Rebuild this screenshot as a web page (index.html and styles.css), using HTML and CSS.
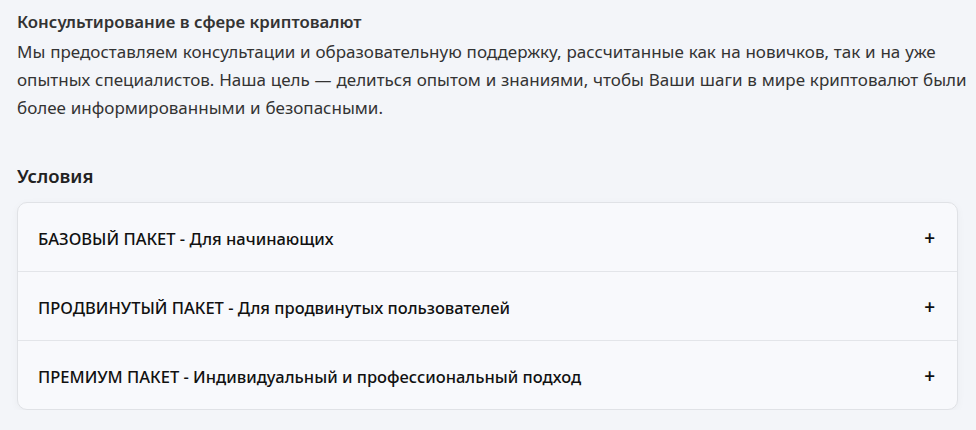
FILE: index.html
```html
<!DOCTYPE html>
<html lang="ru">
<head>
<meta charset="utf-8">
<link rel="stylesheet" href="styles.css">
</head>
<body>
<main class="page">
  <section class="intro">
    <h1 class="intro-title">Консультирование в сфере криптовалют</h1>
    <p class="intro-text">Мы предоставляем консультации и образовательную поддержку, рассчитанные как на новичков, так и на уже опытных специалистов. Наша цель — делиться опытом и знаниями, чтобы Ваши шаги в мире криптовалют были более информированными и безопасными.</p>
  </section>
  <section class="terms">
    <h2 class="terms-title">Условия</h2>
    <div class="accordion">
      <div class="acc-row"><span class="acc-label">БАЗОВЫЙ ПАКЕТ - Для начинающих</span><span class="acc-plus">+</span></div>
      <div class="acc-row"><span class="acc-label">ПРОДВИНУТЫЙ ПАКЕТ - Для продвинутых пользователей</span><span class="acc-plus">+</span></div>
      <div class="acc-row"><span class="acc-label">ПРЕМИУМ ПАКЕТ - Индивидуальный и профессиональный подход</span><span class="acc-plus">+</span></div>
    </div>
  </section>
</main>
</body>
</html>
```
FILE: styles.css
```css
html, body {
  margin: 0;
  padding: 0;
  background: #f3f5f9;
}
body {
  font-family: "Noto Sans", "Open Sans", sans-serif;
  color: #333;
}
.page {
  padding: 8px 18px 0 17px;
}
.intro-title {
  margin: 0;
  font-size: 16.8px;
  font-weight: 600;
  line-height: 28px;
  color: #333;
}
.intro-text {
  margin: 2px -14px 0 0;
  font-size: 17px;
  word-spacing: 0.4px;
  line-height: 28px;
  color: #333;
}
.terms {
  margin-top: 41px;
}
.terms-title {
  margin: 0 0 13px;
  font-size: 18.5px;
  font-weight: 600;
  line-height: 26px;
  color: #222;
}
.accordion {
  background: #f8f9fc;
  border: 1px solid #e0e2e6;
  border-radius: 10px;
  box-shadow: 0 2px 8px rgba(0,0,0,0.04);
  overflow: hidden;
}
.acc-row {
  display: flex;
  align-items: center;
  justify-content: space-between;
  height: 68px;
  padding: 2px 22px 0 20px;
  box-sizing: border-box;
  border-top: 1px solid #e3e5e9;
  color: #111;
  font-size: 16.5px;
  font-weight: 500;
}
.acc-row:first-child {
  border-top: none;
}
.acc-row + .acc-row {
  height: 69px;
}
.acc-plus {
  font-size: 19px;
  font-weight: 600;
}
```
